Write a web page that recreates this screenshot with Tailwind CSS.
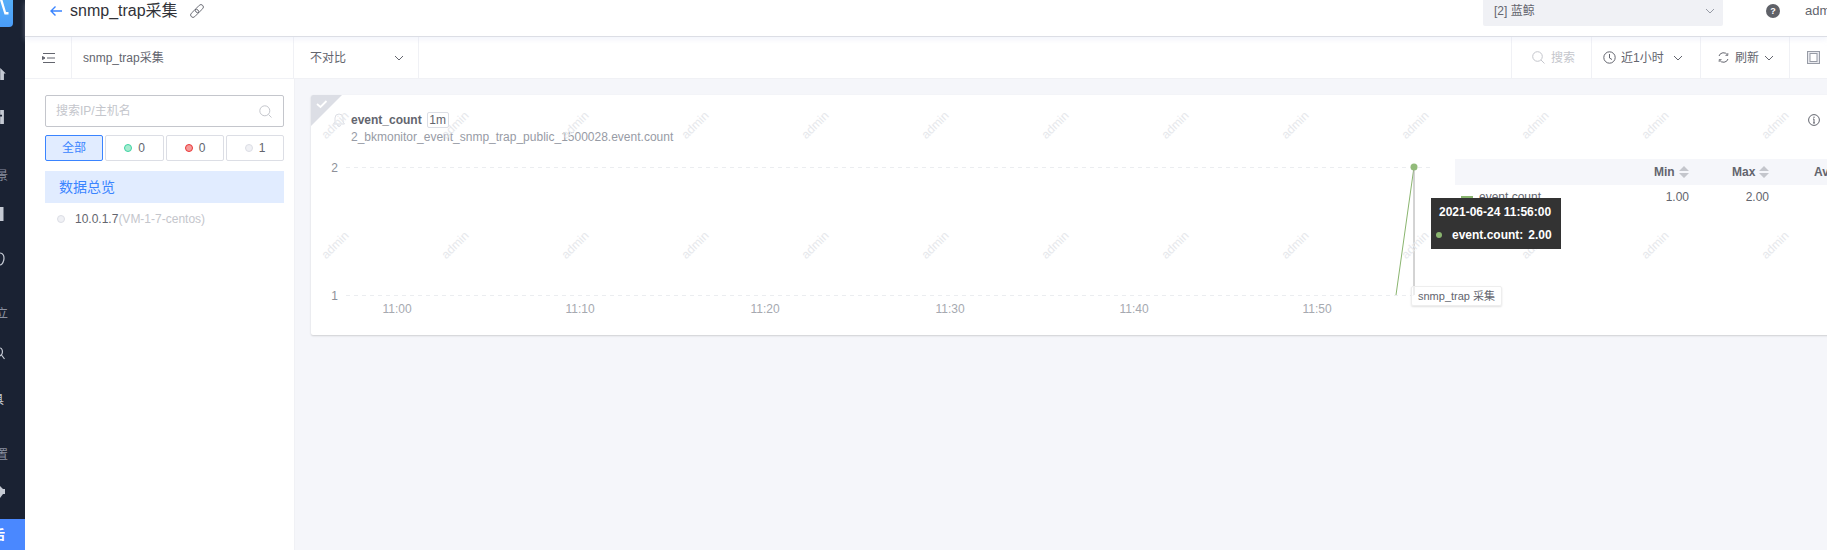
<!DOCTYPE html>
<html lang="zh">
<head>
<meta charset="utf-8">
<script src="https://cdn.jsdelivr.net/npm/@tailwindcss/browser@4"></script>
</head>
<body class="m-0 overflow-hidden bg-white">
<div class="flex h-[550px] w-[1827px] overflow-hidden text-xs text-[#63656e] font-['Liberation_Sans','Noto_Sans_CJK_SC',sans-serif]">

  <!-- Product nav rail, cut at the left edge in the reference -->
  <aside class="relative flex h-full w-[25px] shrink-0 flex-col items-end overflow-hidden bg-[#1a2233] text-[#8a90a0]">
    <div class="flex h-[27px] w-[13px] self-start items-start overflow-hidden rounded-br-[4px] bg-gradient-to-b from-[#55aef8] to-[#4a9cf8]">
      <svg class="h-[16px] w-[13px]" viewBox="0 0 13 16"><path d="M0 0 L2.5 0 L6 12 H8.5 V14.5 H4.5 Z" fill="#fff"/></svg>
    </div>
    <div class="flex h-[523px] w-full flex-col self-start overflow-hidden">
      <div class="flex h-[97px] w-full flex-col">
        <svg class="ml-0 mt-[41px] h-[14px] w-[6px]" viewBox="0 0 6 14"><path d="M0 0 L6 6 H4 V13 H0 Z" fill="#c5cad4"/></svg>
        <svg class="mt-[29px] h-[15px] w-[5px]" viewBox="0 0 5 15"><path d="M0 0 H4 V15 H0 Z M0 5 H2 V7 H0 Z" fill="#c5cad4" fill-rule="evenodd"/></svg>
      </div>
      <span class="mt-[45px] block h-[14px] w-[8px] overflow-hidden text-[12px] leading-[14px] [direction:rtl] whitespace-nowrap">景</span>
      <svg class="mt-[24px] h-[14px] w-[4px]" viewBox="0 0 4 14"><path d="M0 0 H3.5 V14 H0 Z" fill="#c5cad4"/></svg>
      <svg class="mt-[31px] h-[14px] w-[5px]" viewBox="0 0 5 14"><path d="M0 1 C3 1 4.5 4 3.8 8 C3 11 1.5 13 0 13" fill="none" stroke="#c5cad4" stroke-width="1.2"/></svg>
      <span class="mt-[41px] block h-[14px] w-[8px] overflow-hidden text-[12px] leading-[14px] [direction:rtl] whitespace-nowrap">立</span>
      <svg class="mt-[26px] h-[13px] w-[5px]" viewBox="0 0 5 13"><path d="M0 1 C2 1 3 4 2 7 L0 9 M1.5 8 L4.5 12" fill="none" stroke="#c5cad4" stroke-width="1.2"/></svg>
      <span class="mt-[33px] block h-[14px] w-[4px] overflow-hidden text-[12px] leading-[14px] text-[#c5cad4] [direction:rtl] whitespace-nowrap">具</span>
      <span class="mt-[41px] block h-[14px] w-[8px] overflow-hidden text-[12px] leading-[14px] [direction:rtl] whitespace-nowrap">置</span>
      <svg class="mt-[24px] h-[12px] w-[6px]" viewBox="0 0 6 12"><path d="M0 0 L3 3 H5 V8 H3 L0 12 Z" fill="#c5cad4"/></svg>
    </div>
    <div class="absolute bottom-0 left-0 flex h-[31px] w-full items-center bg-[#4a88ff]">
      <span class="block h-[16px] w-[5px] overflow-hidden text-[13px] leading-[16px] font-bold text-white [direction:rtl] whitespace-nowrap">后</span>
    </div>
  </aside>

  <div class="flex h-full min-w-0 flex-1 flex-col">
    <!-- Page header -->
    <header class="relative z-10 flex h-[37px] shrink-0 border-b border-[#dcdee5] bg-white shadow-[0_3px_5px_rgba(220,226,245,0.35)]">
      <div class="flex h-[21px] flex-1 items-center pl-[25px]">
        <svg class="h-[12px] w-[12px] text-[#3a84ff]" viewBox="0 0 12 12" fill="none" stroke="currentColor" stroke-width="1.4"><path d="M12 6 H1 M5.5 1.5 L1 6 L5.5 10.5"/></svg>
        <h1 class="ml-[8px] text-[16px] font-normal leading-[21px] text-[#313238]">snmp_trap采集</h1>
        <svg class="ml-[12px] h-[14px] w-[14px] text-[#63656e]" viewBox="0 0 14 14" fill="none" stroke="currentColor" stroke-width="0.9"><g transform="rotate(-45 7 7)"><rect x="-1" y="4.6" width="9.4" height="4.8" rx="2.4"/><rect x="5.6" y="4.6" width="9.4" height="4.8" rx="2.4"/></g></svg>
      </div>
      <div class="flex h-[26px] w-[344px] shrink-0 items-start overflow-hidden">
        <div class="flex h-[26px] w-[240px] shrink-0 items-center justify-between rounded-b-[2px] bg-[#f0f1f5] pl-[11px] pr-[8px]">
          <span class="pb-[5px] leading-[16px]">[2] 蓝鲸</span>
          <svg class="mb-[5px] h-[10px] w-[10px] text-[#979ba5]" viewBox="0 0 10 10" fill="none" stroke="currentColor" stroke-width="1"><path d="M1 3 L5 7 L9 3"/></svg>
        </div>
        <div class="ml-[43px] mt-[4px] flex h-[14px] w-[14px] shrink-0 items-center justify-center rounded-full bg-[#5f6168] text-[9px] font-bold leading-none text-white">?</div>
        <span class="ml-[25px] shrink-0 text-[13px] leading-[21px]">admin</span>
      </div>
    </header>

    <!-- Toolbar -->
    <div class="flex h-[42px] shrink-0 border-b border-[#f0f1f5] bg-white">
      <div class="flex w-[47px] shrink-0 items-center justify-center border-r border-[#f0f1f5] pl-[1px]">
        <svg class="h-[12px] w-[14px] text-[#63656e]" viewBox="0 0 14 12" fill="none" stroke="currentColor" stroke-width="1"><path d="M1 1.5 H13 M5 6 H13 M1 10.5 H13"/><path d="M0.5 4.5 L3 6 L0.5 7.5 Z" fill="currentColor"/></svg>
      </div>
      <div class="flex w-[222px] shrink-0 items-center border-r border-[#f0f1f5] pl-[11px] text-[12px]">snmp_trap采集</div>
      <div class="flex w-[125px] shrink-0 items-center justify-between border-r border-[#f0f1f5] pl-[16px] pr-[14px] text-[12px]">
        <span>不对比</span>
        <svg class="h-[10px] w-[10px]" viewBox="0 0 10 10" fill="none" stroke="#63656e" stroke-width="1"><path d="M1 3 L5 7 L9 3"/></svg>
      </div>
      <div class="flex-1"></div>
      <div class="flex w-[81px] shrink-0 items-center gap-[6px] border-x border-[#f0f1f5] pl-[20px] text-[#c4c6cc]">
        <svg class="h-[13px] w-[13px]" viewBox="0 0 13 13" fill="none" stroke="currentColor" stroke-width="1"><circle cx="5.5" cy="5.5" r="4.8"/><path d="M9 9 L12.5 12.5"/></svg>
        <span>搜索</span>
      </div>
      <div class="flex w-[109px] shrink-0 items-center border-r border-[#f0f1f5] pl-[11px]">
        <svg class="h-[13px] w-[13px]" viewBox="0 0 13 13" fill="none" stroke="#63656e" stroke-width="1"><circle cx="6.5" cy="6.5" r="5.7"/><path d="M6.5 3 V7 L9 8.5"/></svg>
        <span class="ml-[5px]">近1小时</span>
        <svg class="ml-[9px] h-[10px] w-[10px]" viewBox="0 0 10 10" fill="none" stroke="#63656e" stroke-width="1"><path d="M1 3 L5 7 L9 3"/></svg>
      </div>
      <div class="flex w-[89px] shrink-0 items-center border-r border-[#f0f1f5] pl-[17px]">
        <svg class="h-[11px] w-[11px]" viewBox="0 0 11 11" fill="none" stroke="#63656e" stroke-width="1"><path d="M1 4 A4.7 4.7 0 0 1 9.5 3 M10 7 A4.7 4.7 0 0 1 1.5 8"/><path d="M9.8 1 V3.4 H7.4 M1.2 10 V7.6 H3.6" stroke-width="0.8"/></svg>
        <span class="ml-[6px]">刷新</span>
        <svg class="ml-[5px] h-[10px] w-[10px]" viewBox="0 0 10 10" fill="none" stroke="#63656e" stroke-width="1"><path d="M1 3 L5 7 L9 3"/></svg>
      </div>
      <div class="flex w-[37px] shrink-0 items-center pl-[17px]">
        <svg class="h-[13px] w-[13px]" viewBox="0 0 13 13" fill="none" stroke="#979ba5" stroke-width="1"><rect x="0.5" y="0.5" width="12" height="12" fill="#e8e9ee"/><rect x="3" y="2.5" width="7" height="8" fill="#fff"/></svg>
      </div>
    </div>

    <div class="flex min-h-0 flex-1">
      <!-- Host list -->
      <section class="flex w-[270px] shrink-0 flex-col border-r border-[#f0f1f5] bg-white pl-[20px] pr-[10px] pt-[16px]">
        <div class="flex h-[32px] items-center justify-between rounded-[2px] border border-[#c4c6cc] pl-[10px] pr-[11px]">
          <span class="text-[#c4c6cc]">搜索IP/主机名</span>
          <svg class="h-[13px] w-[13px]" viewBox="0 0 13 13" fill="none" stroke="#c4c6cc" stroke-width="1"><circle cx="5.8" cy="5.8" r="5"/><path d="M9.5 9.5 L12.5 12.5"/></svg>
        </div>
        <div class="mt-[8px] flex h-[26px] gap-[2px]">
          <div class="flex w-[58px] items-center justify-center rounded-[2px] border border-[#3a84ff] bg-[#e1ecff] text-[#3a84ff]">全部</div>
          <div class="flex w-[59px] items-center justify-center gap-[6px] rounded-[2px] border border-[#dcdee5]"><i class="h-[8px] w-[8px] rounded-full border border-[#3fd3a3] bg-[#a5ecd0]"></i><span>0</span></div>
          <div class="flex w-[58px] items-center justify-center gap-[6px] rounded-[2px] border border-[#dcdee5]"><i class="h-[8px] w-[8px] rounded-full border border-[#ea3636] bg-[#f59a9a]"></i><span>0</span></div>
          <div class="flex w-[58px] items-center justify-center gap-[6px] rounded-[2px] border border-[#dcdee5]"><i class="h-[8px] w-[8px] rounded-full border border-[#dcdee5] bg-[#f0f1f5]"></i><span>1</span></div>
        </div>
        <div class="mt-[10px] flex h-[32px] items-center bg-[#e1ecff] pl-[14px] text-[14px] text-[#3a84ff]">数据总览</div>
        <div class="mt-[8px] flex h-[16px] items-center pl-[12px]">
          <i class="h-[8px] w-[8px] rounded-full border border-[#dcdee5] bg-[#f0f1f5]"></i>
          <span class="ml-[10px]">10.0.1.7</span><span class="text-[#c4c6cc]">(VM-1-7-centos)</span>
        </div>
      </section>

      <!-- Chart area -->
      <main class="min-w-0 flex-1 overflow-hidden bg-[#f5f6fa] pl-[16px] pt-[16px]">
        <article class="relative h-[240px] w-[1525px] overflow-hidden rounded-[2px] bg-white shadow-[0_1px_2px_rgba(0,0,0,0.16)]">
          <!-- corner check -->
          <svg class="absolute left-0 top-0 h-[31px] w-[31px]" viewBox="0 0 31 31"><path d="M0 0 H31 L0 31 Z" fill="#dcdee5"/><path d="M6 9 L9.5 12 L15.5 6" fill="none" stroke="#fff" stroke-width="1.8"/></svg>

          <div class="flex h-[49px] items-start justify-between pl-[22px] pr-[16px] pt-[17px]">
            <div class="flex">
              <svg class="mt-[1px] h-[14px] w-[12px]" viewBox="0 0 12 14" fill="none" stroke="#dcdee5" stroke-width="1"><path d="M6 1 a4 4 0 0 1 4 4 V9 L11.5 11 H0.5 L2 9 V5 a4 4 0 0 1 4 -4 Z M4.5 12 a1.5 1.5 0 0 0 3 0"/></svg>
              <div class="ml-[6px]">
                <div class="flex h-[16px] items-center">
                  <b class="font-bold leading-[16px]">event_count</b>
                  <span class="ml-[5px] flex h-[16px] w-[22px] items-center justify-center rounded-[2px] border border-[#dcdee5] leading-none">1m</span>
                </div>
                <div class="mt-[1px] leading-[17px] text-[#979ba5]">2_bkmonitor_event_snmp_trap_public_1500028.event.count</div>
              </div>
            </div>
            <svg class="h-[12px] w-[12px] mt-[2px]" viewBox="0 0 12 12" fill="none" stroke="#63656e" stroke-width="1"><circle cx="6" cy="6" r="5.4"/><path d="M6 5 V9 M5 9 H7 M5 5 H6" /><circle cx="6" cy="3.2" r="0.7" fill="#63656e" stroke="none"/></svg>
          </div>

          <div class="flex">
            <!-- plot -->
            <div class="relative h-[191px] w-[1144px] shrink-0">
              <svg class="absolute inset-0 h-[191px] w-[1144px]" viewBox="0 0 1144 191">
                <path d="M35 23.5 H1120 M35 151.5 H1120" stroke="#ebedf0" stroke-dasharray="4 4" fill="none"/>
                <path d="M1085 151 L1103 23" stroke="#8ab56f" stroke-width="1" fill="none"/>
                <path d="M1103 23 V151" stroke="#a8a8a8" stroke-width="1" fill="none"/>
                <circle cx="1103" cy="23" r="3.5" fill="#92bb7a"/>
                <text x="27" y="27.5" font-size="12" fill="#8d9099" text-anchor="end">2</text>
                <text x="27" y="156" font-size="12" fill="#8d9099" text-anchor="end">1</text>
                <text x="86" y="169" font-size="12" fill="#a6a9b0" text-anchor="middle">11:00</text>
                <text x="269" y="169" font-size="12" fill="#a6a9b0" text-anchor="middle">11:10</text>
                <text x="454" y="169" font-size="12" fill="#a6a9b0" text-anchor="middle">11:20</text>
                <text x="639" y="169" font-size="12" fill="#a6a9b0" text-anchor="middle">11:30</text>
                <text x="823" y="169" font-size="12" fill="#a6a9b0" text-anchor="middle">11:40</text>
                <text x="1006" y="169" font-size="12" fill="#a6a9b0" text-anchor="middle">11:50</text>
              </svg>
            </div>
            <!-- legend table -->
            <div class="w-[400px] shrink-0 pt-[15px]">
              <div class="flex h-[26px] items-center bg-[#f5f6fa] font-bold">
                <div class="w-[199px]"></div>
                <div class="flex w-[36px] items-center">Min<svg class="ml-[4px] h-[12px] w-[10px]" viewBox="0 0 10 12" fill="#c4c6cc"><path d="M5 0 L10 5 H0 Z M5 12 L10 7 H0 Z"/></svg></div>
                <div class="ml-[42px] flex w-[38px] items-center">Max<svg class="ml-[4px] h-[12px] w-[10px]" viewBox="0 0 10 12" fill="#c4c6cc"><path d="M5 0 L10 5 H0 Z M5 12 L10 7 H0 Z"/></svg></div>
                <div class="ml-[44px]">Avg</div>
              </div>
              <div class="flex h-[24px] items-center">
                <i class="ml-[6px] h-[3px] w-[12px] bg-[#8ab56f]"></i>
                <span class="ml-[6px] w-[186px]">event.count</span>
                <span class="w-[24px] text-right">1.00</span>
                <span class="ml-[56px] w-[24px] text-right">2.00</span>
                <span class="ml-[58px]">0.00</span>
              </div>
            </div>
          </div>

          <!-- watermark -->
          <div class="pointer-events-none absolute left-[-36px] top-[-30px] grid grid-cols-[repeat(13,120px)] grid-rows-[repeat(2,120px)] text-[#e6e8ec]">
            <span class="flex items-center justify-center -rotate-45">admin</span><span class="flex items-center justify-center -rotate-45">admin</span><span class="flex items-center justify-center -rotate-45">admin</span><span class="flex items-center justify-center -rotate-45">admin</span><span class="flex items-center justify-center -rotate-45">admin</span><span class="flex items-center justify-center -rotate-45">admin</span><span class="flex items-center justify-center -rotate-45">admin</span><span class="flex items-center justify-center -rotate-45">admin</span><span class="flex items-center justify-center -rotate-45">admin</span><span class="flex items-center justify-center -rotate-45">admin</span><span class="flex items-center justify-center -rotate-45">admin</span><span class="flex items-center justify-center -rotate-45">admin</span><span class="flex items-center justify-center -rotate-45">admin</span>
            <span class="flex items-center justify-center -rotate-45">admin</span><span class="flex items-center justify-center -rotate-45">admin</span><span class="flex items-center justify-center -rotate-45">admin</span><span class="flex items-center justify-center -rotate-45">admin</span><span class="flex items-center justify-center -rotate-45">admin</span><span class="flex items-center justify-center -rotate-45">admin</span><span class="flex items-center justify-center -rotate-45">admin</span><span class="flex items-center justify-center -rotate-45">admin</span><span class="flex items-center justify-center -rotate-45">admin</span><span class="flex items-center justify-center -rotate-45">admin</span><span class="flex items-center justify-center -rotate-45">admin</span><span class="flex items-center justify-center -rotate-45">admin</span><span class="flex items-center justify-center -rotate-45">admin</span>
          </div>

          <!-- hover tooltip -->
          <div class="absolute left-[1120px] top-[103px] z-10 flex h-[51px] w-[130px] flex-col justify-center gap-[9px] bg-[#333333] pl-[5px] font-bold leading-[14px] text-white">
            <div class="pl-[3px]">2021-06-24 11:56:00</div>
            <div class="flex items-center">
              <i class="h-[6px] w-[6px] shrink-0 rounded-full bg-[#8ab56f]"></i>
              <span class="ml-[10px] whitespace-nowrap">event.count:</span><span class="ml-[5px]">2.00</span>
            </div>
          </div>
          <!-- series tag under crosshair -->
          <div class="absolute left-[1100px] top-[191px] z-10 flex h-[20px] w-[91px] items-center rounded-[2px] border border-[#eeeeee] bg-white/60 pl-[6px] text-[11px] leading-none text-[#63656e] shadow-[0_1px_2px_rgba(0,0,0,0.12)]">snmp_trap 采集</div>
        </article>
      </main>
    </div>
  </div>
</div>
</body>
</html>
